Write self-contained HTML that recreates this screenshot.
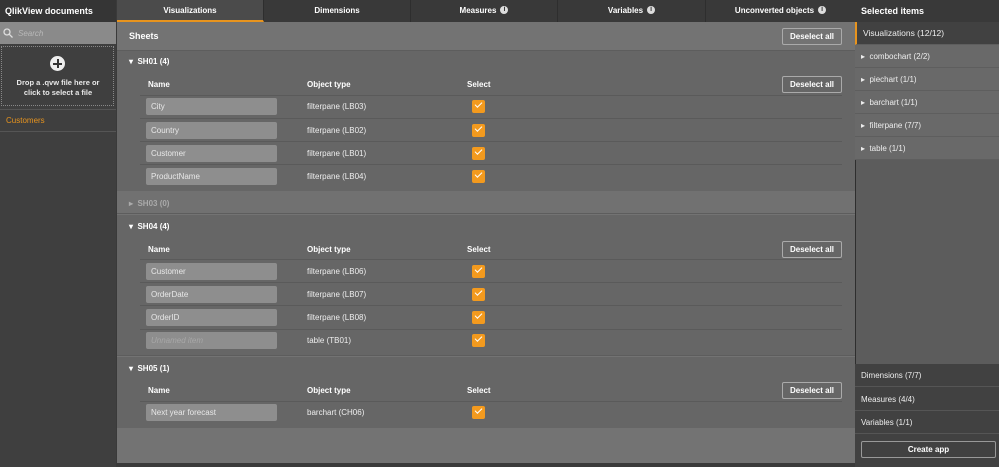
<!DOCTYPE html>
<html><head><style>
*{margin:0;padding:0;box-sizing:border-box}
body{width:999px;height:467px;overflow:hidden;background:#3a3a3a;font-family:"Liberation Sans",sans-serif;font-size:8px;color:#eee;position:relative}
.a{position:absolute}
.b{font-weight:bold}
.tab{position:absolute;top:0;height:22px;line-height:22px;text-align:center;font-weight:bold;font-size:8px;color:#fff;border-right:1px solid #2e2e2e}
.i{display:inline-block;width:8px;height:8px;border-radius:50%;background:#ddd;color:#333;font-size:7px;font-weight:bold;line-height:8px;text-align:center;vertical-align:middle;margin-left:4px;position:relative;top:-1px}
.inp{position:absolute;left:146px;width:131px;height:17px;background:#8e8e8e;border-radius:2px;color:#e8e8e8;font-size:8px;line-height:17px;padding-left:5px}
.ot{position:absolute;left:307px;font-size:8px;color:#eee}
.cb{position:absolute;left:472px;width:13px;height:13px;background:#f39a1e;border-radius:2px}
.cb:after{content:"";position:absolute;left:3px;top:2px;width:6px;height:3px;border-left:1.5px solid #fff;border-bottom:1.5px solid #fff;transform:rotate(-45deg)}
.ln{position:absolute;left:140px;width:702px;height:1px;background:#5a5a5a}
.btn{position:absolute;left:782px;width:60px;height:17px;border:1px solid #aaa;border-radius:2px;text-align:center;line-height:15px;font-weight:bold;font-size:8px;color:#fff}
.hd{position:absolute;font-weight:bold;font-size:8px;color:#fff}
.ri{position:absolute;left:855px;width:144px;height:23px;line-height:23px;padding-left:6px;font-size:8px;color:#eee;border-bottom:1px solid #5e5e5e}
</style></head><body>
<div class="a" style="left:0;top:0;width:116px;height:467px;background:#3f3f3f"></div>
<div class="a b" style="left:0;padding-left:5px;top:0;height:22px;line-height:22px;font-size:9px;color:#fff;background:#353535;width:116px">QlikView documents</div>
<div class="a" style="left:0;top:22px;width:116px;height:22px;background:#8a8a8a"></div>
<svg class="a" style="left:3px;top:28px" width="10" height="10"><circle cx="4" cy="4" r="3" stroke="#ddd" stroke-width="1.3" fill="none"/><line x1="6.3" y1="6.3" x2="9.5" y2="9.5" stroke="#ddd" stroke-width="1.3"/></svg>
<div class="a" style="left:18px;top:29px;font-style:italic;color:#b8b8b8;font-size:8px">Search</div>
<div class="a" style="left:1px;top:46px;width:113px;height:60px;border:1px dotted #888"></div>
<div class="a" style="left:50px;top:56px;width:15px;height:15px;border-radius:50%;background:#eee"></div>
<div class="a" style="left:56.5px;top:59px;width:2px;height:9px;background:#333"></div>
<div class="a" style="left:53px;top:62.5px;width:9px;height:2px;background:#333"></div>
<div class="a b" style="left:0;top:78px;width:116px;text-align:center;font-size:7.5px;line-height:10px;color:#e8e8e8">Drop a .qvw file here or<br>click to select a file</div>
<div class="a" style="left:0;top:109px;width:116px;height:1px;background:#555"></div>
<div class="a" style="left:6px;top:116px;color:#e8941e;font-size:8px">Customers</div>
<div class="a" style="left:0;top:131px;width:116px;height:1px;background:#555"></div>
<div class="a" style="left:117px;top:0;width:738px;height:22px;background:#393939"></div>
<div class="tab" style="left:117px;width:147px;background:#4b4b4b;border-bottom:2px solid #e8941e">Visualizations</div>
<div class="tab" style="left:264px;width:147px">Dimensions</div>
<div class="tab" style="left:411px;width:147px">Measures<span class="i">i</span></div>
<div class="tab" style="left:558px;width:148px">Variables<span class="i">i</span></div>
<div class="tab" style="left:706px;width:149px;border-right:none">Unconverted objects<span class="i">i</span></div>
<div class="a" style="left:117px;top:22px;width:738px;height:441px;background:#737373"></div>
<div class="a" style="left:117px;top:50px;width:738px;height:1px;background:#5d5d5d"></div>
<div class="hd" style="left:129px;top:31px;font-size:9px">Sheets</div>
<div class="btn" style="top:28px">Deselect all</div>
<div class="a" style="left:117px;top:51px;width:738px;height:140px;background:#666"></div>
<div class="hd" style="left:129px;top:57px">▾ &nbsp;SH01 (4)</div>
<div class="hd" style="left:148px;top:80px">Name</div><div class="hd" style="left:307px;top:80px">Object type</div><div class="hd" style="left:467px;top:80px">Select</div>
<div class="btn" style="top:76px">Deselect all</div>
<div class="ln" style="top:95px"></div>
<div class="inp" style="top:98px">City</div><div class="ot" style="top:102px">filterpane (LB03)</div><div class="cb" style="top:100px"></div>
<div class="ln" style="top:118px"></div>
<div class="inp" style="top:122px">Country</div><div class="ot" style="top:126px">filterpane (LB02)</div><div class="cb" style="top:124px"></div>
<div class="ln" style="top:141px"></div>
<div class="inp" style="top:145px">Customer</div><div class="ot" style="top:149px">filterpane (LB01)</div><div class="cb" style="top:147px"></div>
<div class="ln" style="top:164px"></div>
<div class="inp" style="top:168px">ProductName</div><div class="ot" style="top:172px">filterpane (LB04)</div><div class="cb" style="top:170px"></div>
<div class="a" style="left:117px;top:191px;width:738px;height:23px;background:#717171;border-bottom:1px solid #5d5d5d"></div>
<div class="hd" style="left:129px;top:199px;color:#aaa">▸ &nbsp;SH03 (0)</div>
<div class="a" style="left:117px;top:215px;width:738px;height:141px;background:#666;border-bottom:1px solid #5d5d5d"></div>
<div class="hd" style="left:129px;top:222px">▾ &nbsp;SH04 (4)</div>
<div class="hd" style="left:148px;top:245px">Name</div><div class="hd" style="left:307px;top:245px">Object type</div><div class="hd" style="left:467px;top:245px">Select</div>
<div class="btn" style="top:241px">Deselect all</div>
<div class="ln" style="top:259px"></div>
<div class="inp" style="top:263px">Customer</div><div class="ot" style="top:267px">filterpane (LB06)</div><div class="cb" style="top:265px"></div>
<div class="ln" style="top:282px"></div>
<div class="inp" style="top:286px">OrderDate</div><div class="ot" style="top:290px">filterpane (LB07)</div><div class="cb" style="top:288px"></div>
<div class="ln" style="top:305px"></div>
<div class="inp" style="top:309px">OrderID</div><div class="ot" style="top:313px">filterpane (LB08)</div><div class="cb" style="top:311px"></div>
<div class="ln" style="top:329px"></div>
<div class="inp" style="top:332px;color:#a8a8a8;font-style:italic">Unnamed item</div><div class="ot" style="top:336px">table (TB01)</div><div class="cb" style="top:334px"></div>
<div class="a" style="left:117px;top:357px;width:738px;height:71px;background:#666"></div>
<div class="hd" style="left:129px;top:364px">▾ &nbsp;SH05 (1)</div>
<div class="hd" style="left:148px;top:386px">Name</div><div class="hd" style="left:307px;top:386px">Object type</div><div class="hd" style="left:467px;top:386px">Select</div>
<div class="btn" style="top:382px">Deselect all</div>
<div class="ln" style="top:401px"></div>
<div class="inp" style="top:404px">Next year forecast</div><div class="ot" style="top:408px">barchart (CH06)</div><div class="cb" style="top:406px"></div>
<div class="a" style="left:855px;top:0;width:144px;height:467px;background:#5c5c5c;border-left:1px solid #2e2e2e"></div>
<div class="a" style="left:855px;top:0;width:144px;height:22px;background:#393939"></div>
<div class="a b" style="left:861px;top:0;height:22px;line-height:22px;font-size:9px;color:#fff">Selected items</div>
<div class="ri" style="top:22px;background:#414141;border-left:2px solid #e8941e;font-size:8.5px">Visualizations (12/12)</div>
<div class="ri" style="top:45px;background:#696969">▸ &nbsp;combochart (2/2)</div>
<div class="ri" style="top:68px;background:#696969">▸ &nbsp;piechart (1/1)</div>
<div class="ri" style="top:91px;background:#696969">▸ &nbsp;barchart (1/1)</div>
<div class="ri" style="top:114px;background:#696969">▸ &nbsp;filterpane (7/7)</div>
<div class="ri" style="top:137px;background:#696969">▸ &nbsp;table (1/1)</div>
<div class="a" style="left:855px;top:364px;width:144px;height:103px;background:#414141"></div>
<div class="ri" style="top:364px;background:#414141;border-color:#555">Dimensions (7/7)</div>
<div class="ri" style="top:388px;background:#414141;border-color:#555">Measures (4/4)</div>
<div class="ri" style="top:411px;background:#414141;border-color:#555">Variables (1/1)</div>
<div class="a b" style="left:861px;top:441px;width:135px;height:17px;border:1px solid #999;border-radius:2px;text-align:center;line-height:15px;color:#fff;font-size:8px">Create app</div>
</body></html>
